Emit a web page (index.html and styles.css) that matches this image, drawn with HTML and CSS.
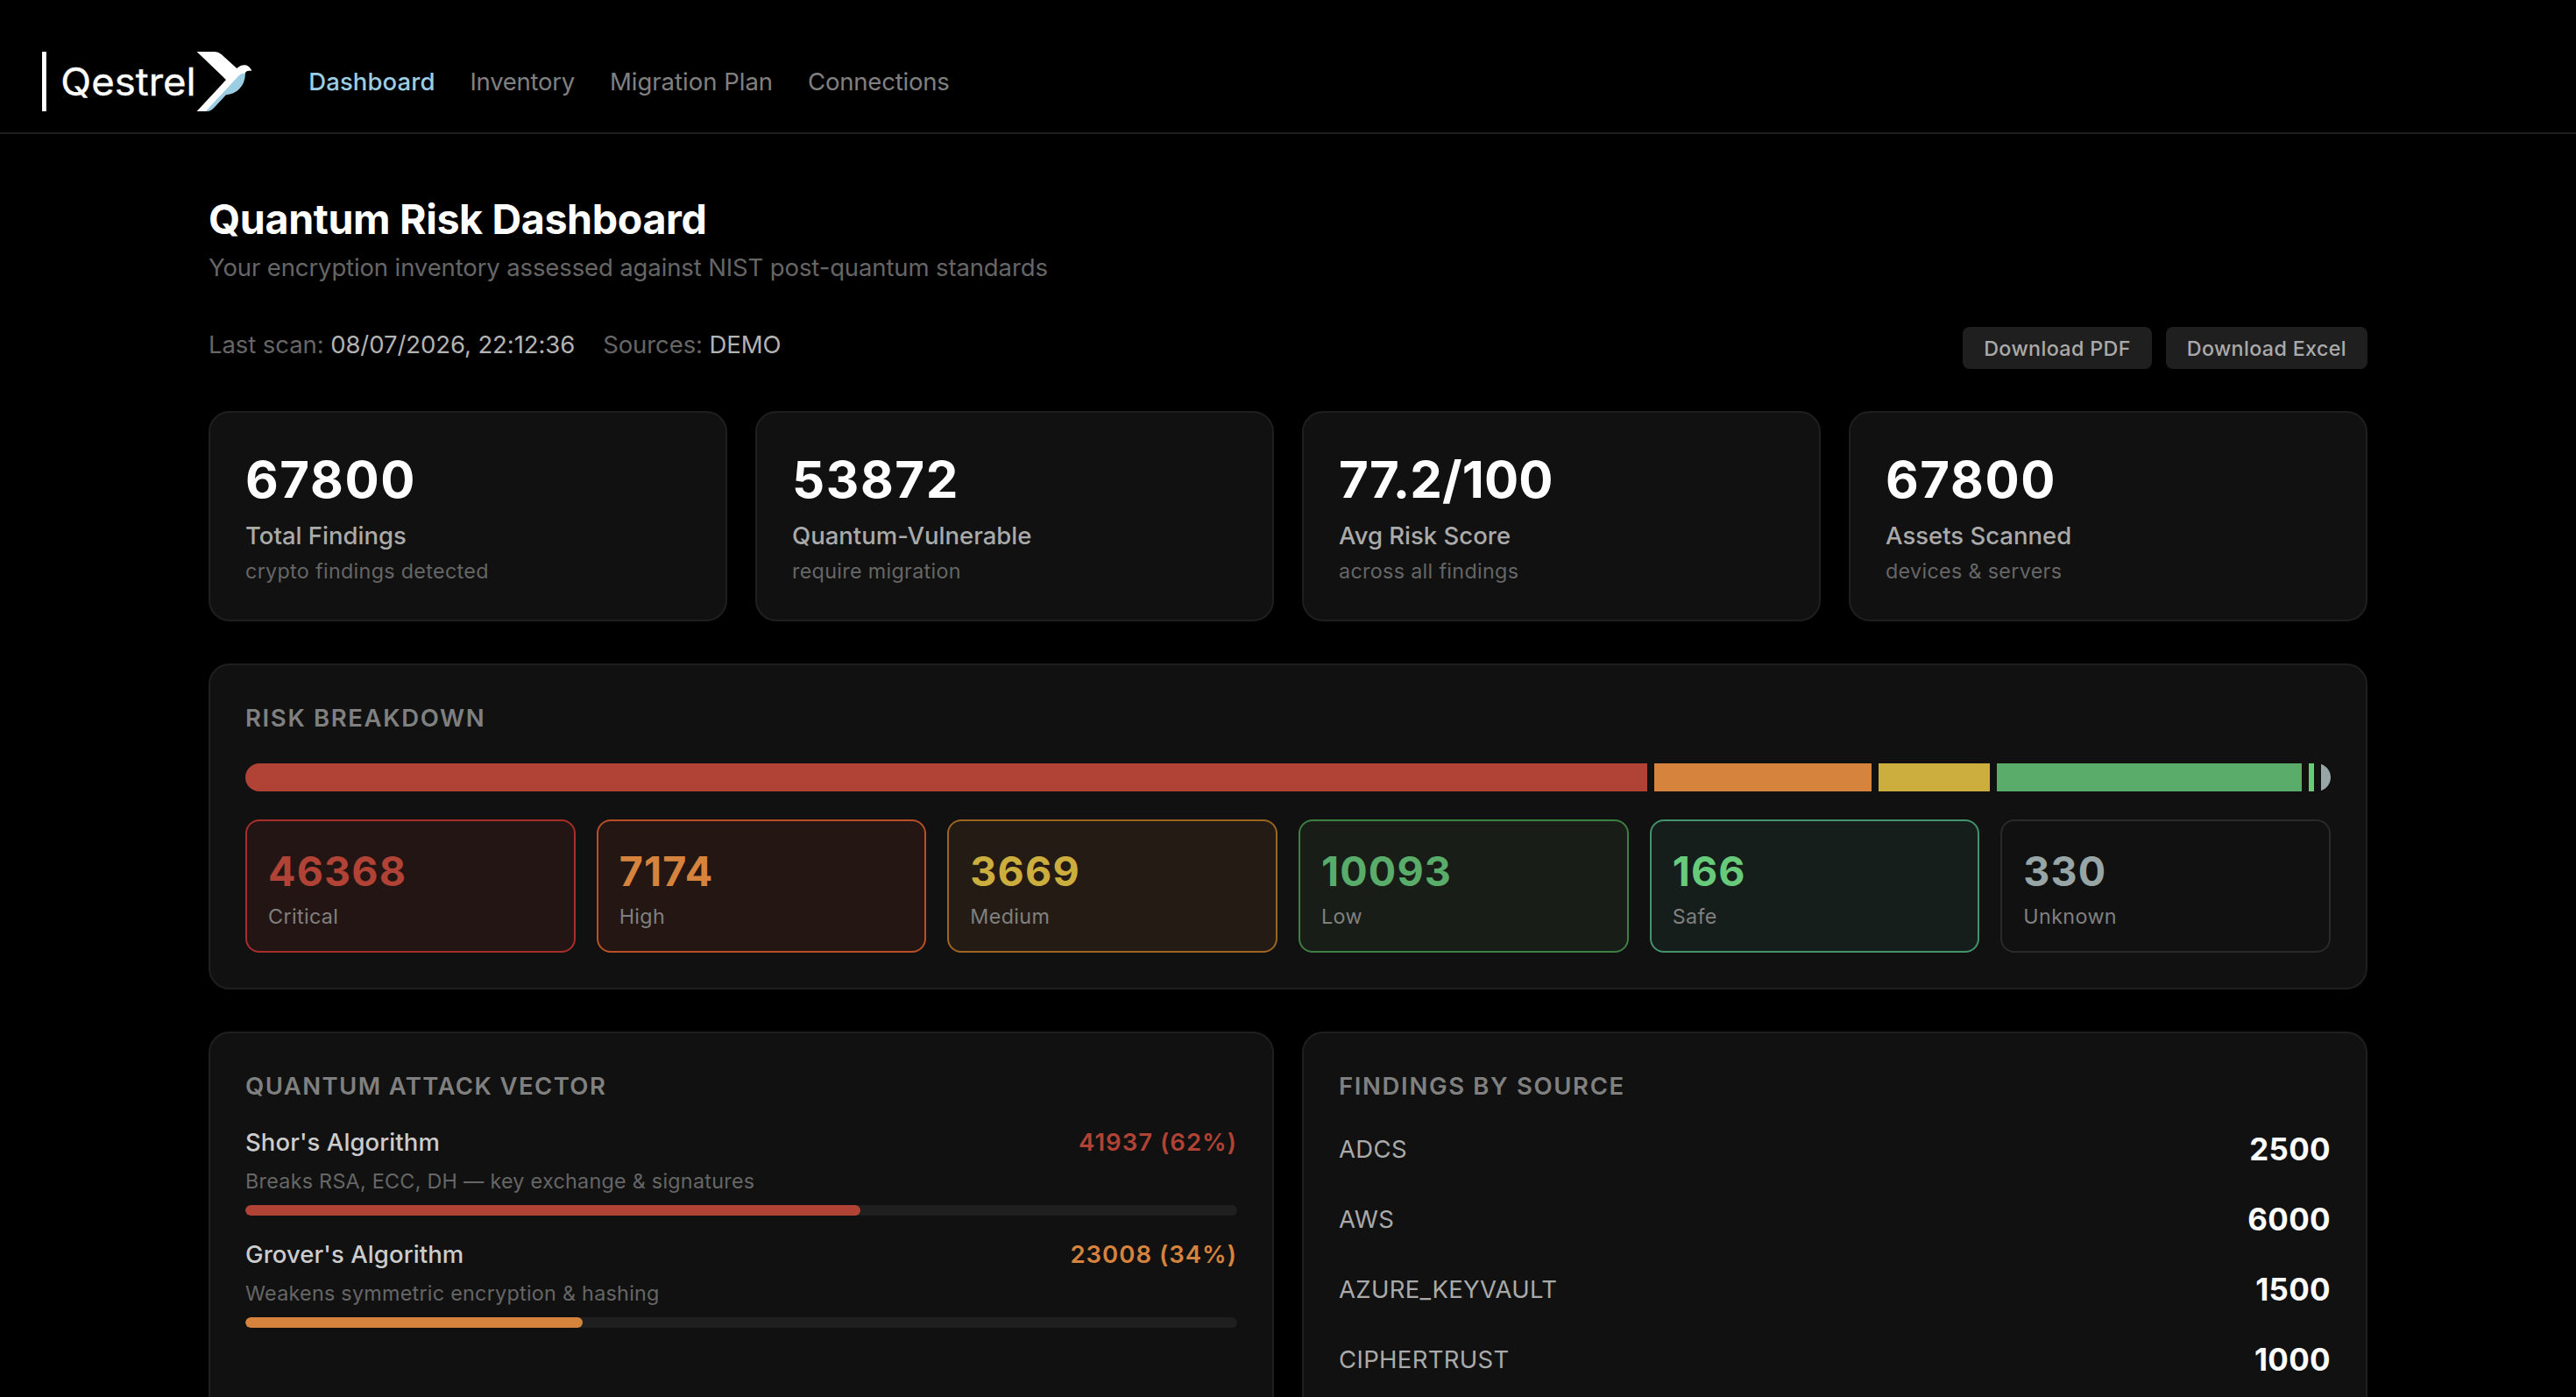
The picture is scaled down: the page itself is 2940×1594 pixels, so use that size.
FILE: index.html
```html
<!DOCTYPE html>
<html lang="en">
<head>
<meta charset="utf-8">
<title>Quantum Risk Dashboard</title>
<link rel="stylesheet" href="styles.css">
</head>
<body>
<header class="topbar">
  <svg class="logo" viewBox="54 57 718 204" role="img" aria-label="Qestrel">
    <rect x="54" y="57" width="14.5" height="204" fill="#fff"/>
    <text class="logo-word" x="118" y="206" textLength="463" lengthAdjust="spacingAndGlyphs">Qestrel</text>
    <path fill="#fff" d="M584 57H645Q658 57 668 66L721 114Q735 100 751 103Q765 107 772 122H763Q752 122 749 132L620 261H584L684 153Z"/>
    <path fill="#9bcde3" d="M614 261L728 139Q738 129 750 131Q750 164 728 186Q712 202 684 205L642 250Q632 261 620 261Z"/>
  </svg>
  <nav class="nav">
    <a class="nav-link active">Dashboard</a>
    <a class="nav-link inventory">Inventory</a>
    <a class="nav-link migration">Migration Plan</a>
    <a class="nav-link">Connections</a>
  </nav>
</header>

<main class="page">
  <h1 class="title">Quantum Risk Dashboard</h1>
  <p class="subtitle">Your encryption inventory assessed against NIST post-quantum standards</p>

  <div class="meta">
    <div class="meta-info">
      <span>Last scan: <b>08/07/2026, 22:12:36</b></span>
      <span>Sources: <b>DEMO</b></span>
    </div>
    <div class="actions">
      <button class="button">Download PDF</button>
      <button class="button">Download Excel</button>
    </div>
  </div>

  <section class="stats">
    <article class="card"><div class="stat-value">67800</div><div class="stat-label">Total Findings</div><div class="stat-note">crypto findings detected</div></article>
    <article class="card"><div class="stat-value">53872</div><div class="stat-label">Quantum-Vulnerable</div><div class="stat-note">require migration</div></article>
    <article class="card"><div class="stat-value score">77.2/100</div><div class="stat-label">Avg Risk Score</div><div class="stat-note">across all findings</div></article>
    <article class="card"><div class="stat-value">67800</div><div class="stat-label">Assets Scanned</div><div class="stat-note">devices &amp; servers</div></article>
  </section>

  <section class="card risk">
    <h2 class="heading">RISK BREAKDOWN</h2>
    <div class="risk-bar">
      <i class="fill-critical" style="flex-grow:46368"></i>
      <i class="fill-high" style="flex-grow:7174"></i>
      <i class="fill-medium" style="flex-grow:3669"></i>
      <i class="fill-low" style="flex-grow:10093"></i>
      <i class="fill-safe" style="flex-grow:166"></i>
      <i class="fill-unknown" style="flex-grow:330"></i>
    </div>
    <div class="tiles">
      <div class="tile critical"><div class="tile-value">46368</div><div class="tile-label">Critical</div></div>
      <div class="tile high"><div class="tile-value">7174</div><div class="tile-label">High</div></div>
      <div class="tile medium"><div class="tile-value">3669</div><div class="tile-label">Medium</div></div>
      <div class="tile low"><div class="tile-value">10093</div><div class="tile-label">Low</div></div>
      <div class="tile safe"><div class="tile-value">166</div><div class="tile-label">Safe</div></div>
      <div class="tile unknown"><div class="tile-value">330</div><div class="tile-label">Unknown</div></div>
    </div>
  </section>

  <section class="panels">
    <article class="card">
      <h2 class="heading vector-heading">QUANTUM ATTACK VECTOR</h2>
      <div class="vector">
        <div class="vector-row"><span>Shor's Algorithm</span><span class="vector-count text-critical">41937 (62%)</span></div>
        <div class="vector-note">Breaks RSA, ECC, DH — key exchange &amp; signatures</div>
        <div class="track"><div class="progress fill-critical" style="width:62%"></div></div>
      </div>
      <div class="vector">
        <div class="vector-row"><span>Grover's Algorithm</span><span class="vector-count text-high">23008 (34%)</span></div>
        <div class="vector-note">Weakens symmetric encryption &amp; hashing</div>
        <div class="track"><div class="progress fill-high" style="width:34%"></div></div>
      </div>
    </article>
    <article class="card">
      <h2 class="heading">FINDINGS BY SOURCE</h2>
      <div class="sources">
        <div class="source"><span>ADCS</span><span class="source-count">2500</span></div>
        <div class="source"><span>AWS</span><span class="source-count">6000</span></div>
        <div class="source"><span>AZURE_KEYVAULT</span><span class="source-count">1500</span></div>
        <div class="source"><span>CIPHERTRUST</span><span class="source-count">1000</span></div>
      </div>
    </article>
  </section>
</main>
</body>
</html>
```
FILE: styles.css
```css
* { box-sizing: border-box; margin: 0; padding: 0; }

body {
  height: 1594px;
  overflow: hidden;
  background: #000;
  color: #fff;
  font: 400 27.5px/40px Inter, "Liberation Sans", sans-serif;
}

/* Top bar */
.topbar {
  display: flex;
  gap: 64px;
  height: 153px;
  padding: 59px 48px 24px;
  border-bottom: 2px solid #1f1f1f;
}
.logo { width: 239.3px; height: 68px; flex: none; }
.logo-word { font: 400 133px Inter, sans-serif; fill: #fff; stroke: #fff; stroke-width: 1px; }
.nav { display: flex; align-items: center; gap: 40px; padding-left: 1px; }
.nav-link { color: #808080; letter-spacing: -0.0075em; }
.nav-link.active { color: #9bcde3; font-weight: 500; letter-spacing: 0.003em; }
.nav-link.inventory { letter-spacing: -0.01em; }
.nav-link.migration { letter-spacing: 0; }

/* Page header */
.page { width: 2560px; margin: 0 auto; padding: 64px 48px 0; }
.title { font-size: 46.6px; line-height: 66px; font-weight: 700; letter-spacing: -0.008em; }
.subtitle { margin-top: 2px; color: #666; letter-spacing: -0.0045em; }
.meta { display: flex; justify-content: space-between; align-items: flex-start; margin-top: 48px; }
.meta-info { display: flex; gap: 32px; color: #666; letter-spacing: -0.003em; }
.meta-info b { font-weight: 400; color: #b3b3b3; }
.actions { display: flex; gap: 16px; }
.button {
  height: 48px;
  padding: 2px 24px 0;
  border: 0;
  border-radius: 8px;
  background: #1f1f1f;
  color: #aaa;
  font: 500 23.3px/46px Inter, sans-serif;
  letter-spacing: 0.015em;
}

/* Cards */
.card { padding: 40px; border: 2px solid #1f1f1f; border-radius: 24px; background: #111; }
.stats { display: grid; grid-template-columns: repeat(4, 1fr); gap: 32px; margin-top: 48px; }
.stat-value { font-size: 58.2px; line-height: 73px; font-weight: 700; letter-spacing: 0.027em; }
.stat-value.score { letter-spacing: 0.002em; }
.stat-label { margin-top: 7px; color: #aaa; font-weight: 500; letter-spacing: 0; }
.stat-note { margin-top: 5px; color: #666; font-size: 23.3px; line-height: 31px; letter-spacing: 0.014em; }
.heading { color: #808080; font-size: 27.5px; line-height: 40px; font-weight: 600; letter-spacing: 0.06em; }
.vector-heading { letter-spacing: 0.051em; }

/* Risk breakdown */
.risk { margin-top: 48px; }
.risk-bar { display: flex; gap: 8px; height: 32px; margin-top: 32px; border-radius: 16px; overflow: hidden; }
.risk-bar i { flex: 0 0 0; }
.tiles { display: grid; grid-template-columns: repeat(6, 1fr); gap: 24px; margin-top: 32px; }
.tile { padding: 24px; border: 2px solid; border-radius: 16px; }
.tile-value { font-size: 46.6px; line-height: 66px; font-weight: 700; letter-spacing: 0.025em; }
.tile-label { margin-top: 3px; color: #808080; font-size: 23.3px; line-height: 31px; letter-spacing: 0.016em; }
.critical { color: #b04335; background: #241515; border-color: #a82e29; }
.high { color: #d6833d; background: #241713; border-color: #b84f26; }
.medium { color: #ccae3e; background: #241b15; border-color: #9b6522; }
.low { color: #59ac69; background: #181e17; border-color: #3e7f43; }
.safe { color: #67cb7b; background: #151e1b; border-color: #43936c; }
.unknown { color: #97a5a6; background: #111; border-color: #2a2a2a; }
.fill-critical { background: #b04335; }
.fill-high { background: #d6833d; }
.fill-medium { background: #ccae3e; }
.fill-low { background: #59ac69; }
.fill-safe { background: #67cb7b; }
.fill-unknown { background: #97a5a6; }
.text-critical { color: #b04335; }
.text-high { color: #d6833d; }

/* Lower panels */
.panels { display: grid; grid-template-columns: 1fr 1fr; gap: 32px; margin-top: 48px; }
.panels .card { height: 417px; padding-bottom: 0; border-bottom: 0; border-radius: 24px 24px 0 0; }
.vector { margin-top: 24px; }
.vector-row { display: flex; justify-content: space-between; color: #ccc; font-weight: 500; letter-spacing: 0.003em; }
.vector-count { font-weight: 600; letter-spacing: 0.037em; }
.vector-note { margin-top: 9px; color: #666; font-size: 23.3px; line-height: 31px; letter-spacing: 0.012em; }
.track { height: 12px; margin-top: 12px; border-radius: 6px; background: #1f1f1f; overflow: hidden; }
.progress { height: 100%; border-radius: 6px; }
.sources { margin-top: 12px; }
.source { display: flex; justify-content: space-between; align-items: center; height: 80px; color: #aaa; letter-spacing: 0.012em; }
.source-count { color: #fff; font-size: 34.9px; font-weight: 700; letter-spacing: 0.01em; }
```
